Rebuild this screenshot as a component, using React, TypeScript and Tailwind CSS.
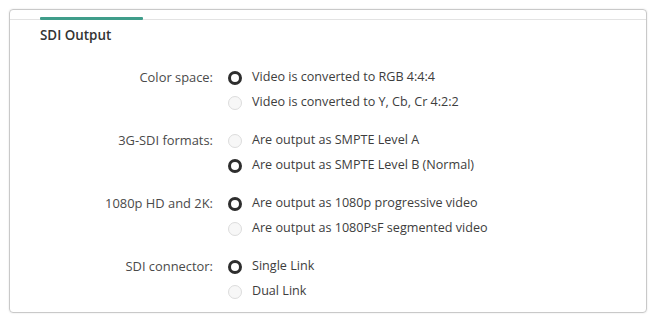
import React from "react";

type Group = { label: string; options: { text: string; selected: boolean }[] };

const groups: Group[] = [
  {
    label: "Color space:",
    options: [
      { text: "Video is converted to RGB 4:4:4", selected: true },
      { text: "Video is converted to Y, Cb, Cr 4:2:2", selected: false },
    ],
  },
  {
    label: "3G-SDI formats:",
    options: [
      { text: "Are output as SMPTE Level A", selected: false },
      { text: "Are output as SMPTE Level B (Normal)", selected: true },
    ],
  },
  {
    label: "1080p HD and 2K:",
    options: [
      { text: "Are output as 1080p progressive video", selected: true },
      { text: "Are output as 1080PsF segmented video", selected: false },
    ],
  },
  {
    label: "SDI connector:",
    options: [
      { text: "Single Link", selected: true },
      { text: "Dual Link", selected: false },
    ],
  },
];

function Radio({ selected }: { selected: boolean }) {
  return selected ? (
    <span className="block w-[14px] h-[14px] rounded-full border-[3.5px] border-[#2e2e2e] bg-white" />
  ) : (
    <span className="block w-[14px] h-[14px] rounded-full border border-[#dcdcdc] bg-[#f7f7f7]" />
  );
}

export default function App() {
  return (
    <div
      className="w-[651px] h-[315px] bg-white pt-[9px] pl-[9px] pr-[4px] pb-[2px]"
      style={{ fontFamily: '"Open Sans", "Noto Sans", sans-serif' }}
    >
      <div className="h-[304px] border border-[#c9c9c9] rounded-[4px] shadow-[0_0_2px_rgba(0,0,0,0.12)] flex flex-col">
        <div className="h-[10px] border-b border-[#e3e3e3] relative shrink-0">
          <div className="absolute left-[30px] bottom-[-1px] w-[103px] h-[3px] bg-[#3f9d8a] rounded-[1px]" />
        </div>
        <div className="pl-[30px] pt-[9px] text-[13.4px] font-semibold text-[#333] leading-none">
          SDI Output
        </div>
        <div className="flex flex-col gap-[13px] mt-[23px]">
          {groups.map((g) => (
            <div key={g.label} className="flex flex-col">
              {g.options.map((o, i) => (
                <div key={o.text} className="flex items-center h-[25px]">
                  <div className="w-[203px] text-right text-[12.9px] text-[#4a4a4a] shrink-0">
                    {i === 0 ? g.label : ""}
                  </div>
                  <div className="ml-[15px] shrink-0">
                    <Radio selected={o.selected} />
                  </div>
                  <div className="ml-[10px] text-[12.6px] text-[#3d3d3d]">{o.text}</div>
                </div>
              ))}
            </div>
          ))}
        </div>
      </div>
    </div>
  );
}
